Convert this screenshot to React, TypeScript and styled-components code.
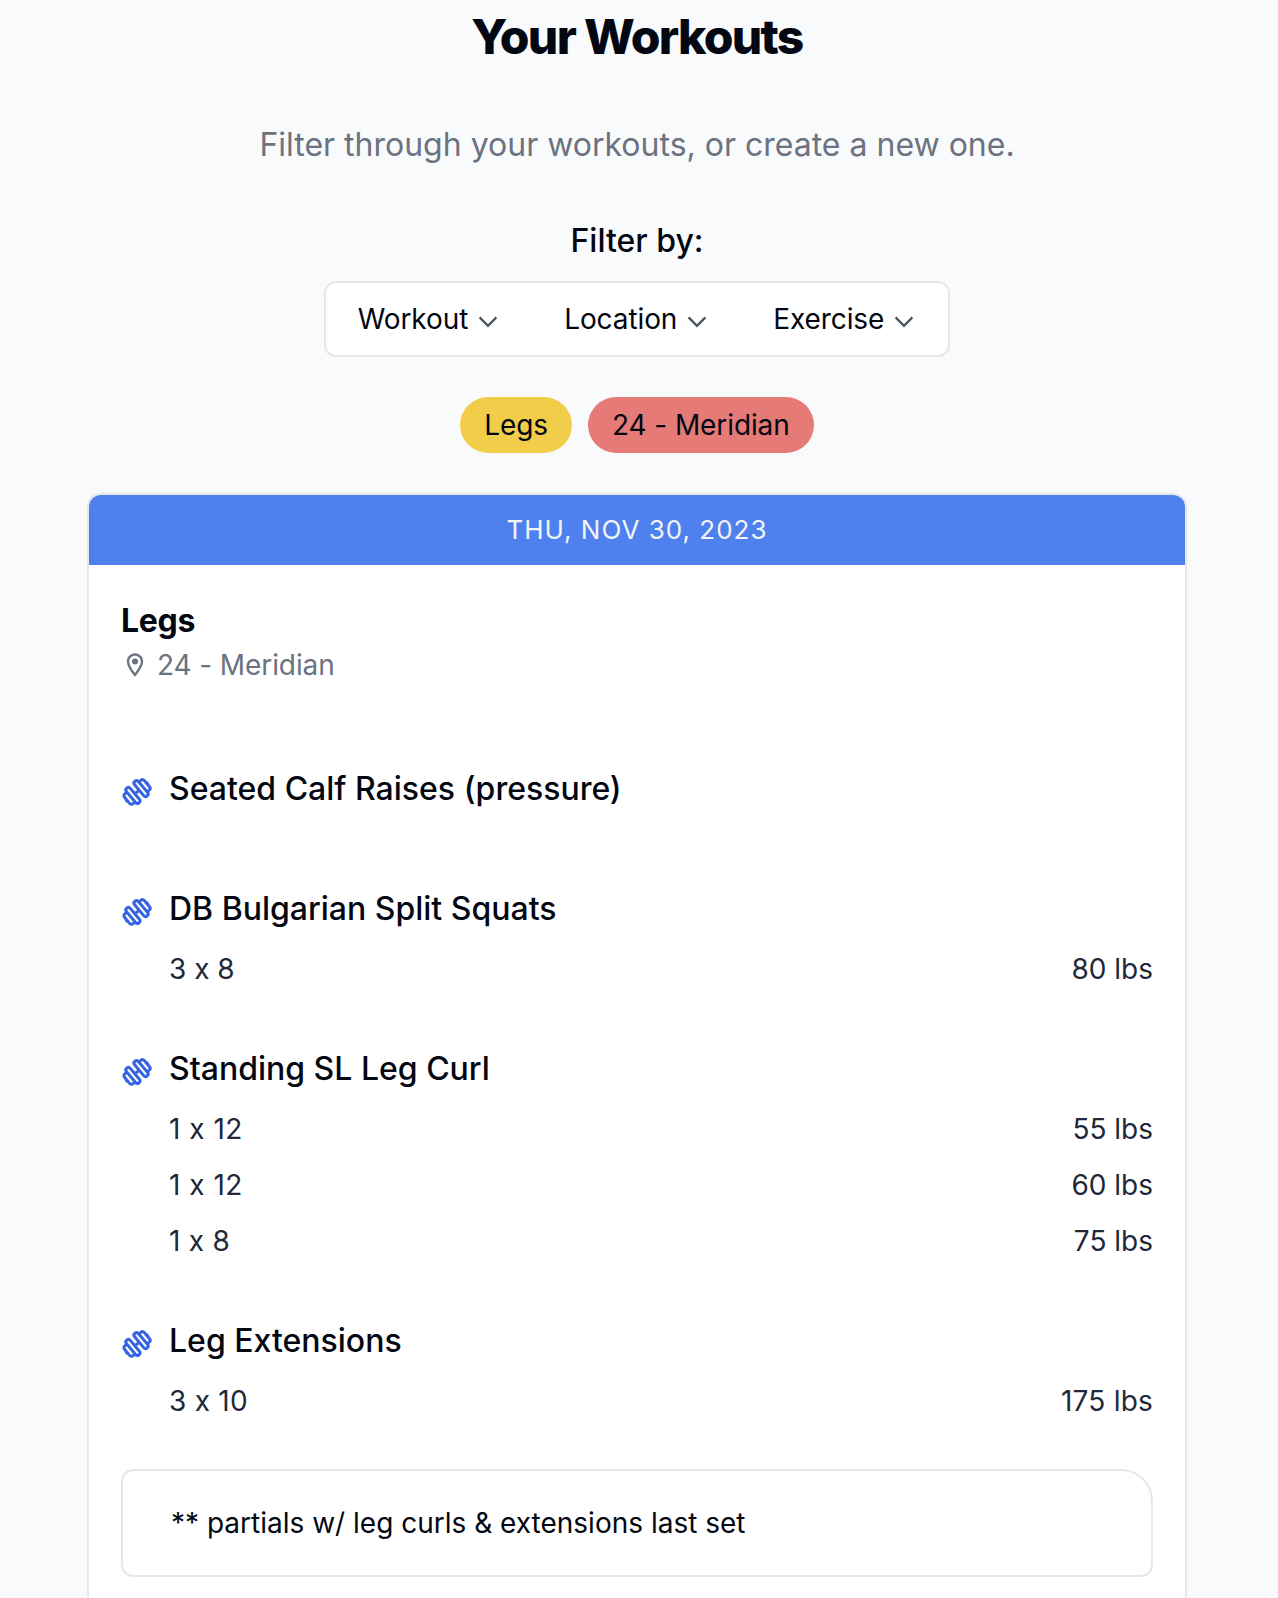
import React from "react";
import styled, { createGlobalStyle } from "styled-components";

const GlobalStyle = createGlobalStyle`
  *, *::before, *::after { box-sizing: border-box; }
  html, body { margin: 0; background: #f9fafc; }
  html { overflow: hidden; }
  body {
    font-family: Inter, "Liberation Sans", sans-serif;
    font-size: 28px;
    line-height: 40px;
    font-feature-settings: "calt" 0;
    color: #030712;
    -webkit-font-smoothing: antialiased;
  }
`;

const Page = styled.main`
  height: 1598px;
  overflow: hidden;
  padding: 13px 4px 0 0;
  display: flex;
  flex-direction: column;
  align-items: center;
`;

const Title = styled.h1`
  margin: 0;
  font-size: 48px;
  line-height: 48px;
  font-weight: 800;
  letter-spacing: -0.035em;
`;

const Subtitle = styled.p`
  margin: 56px 0 0;
  font-size: 32px;
  line-height: 56px;
  color: #6b7280;
`;

const FilterLabel = styled.h2`
  margin: 48px 0 0;
  font-size: 32px;
  line-height: 40px;
  font-weight: 500;
`;

const FilterBar = styled.div`
  margin-top: 20px;
  display: flex;
  gap: 64px;
  padding: 16px 32px;
  border: 2px solid #e5e7eb;
  border-radius: 12px;
  background: #fff;
`;

const FilterButton = styled.button`
  display: flex;
  align-items: center;
  gap: 8px;
  padding: 0;
  border: 0;
  background: none;
  font: inherit;
  letter-spacing: -0.1px;
  color: inherit;
`;

const Chevron = styled.svg`
  width: 24px;
  height: 24px;
  margin-top: 5px;
  fill: none;
  stroke: #4b5563;
  stroke-width: 2.4;
`;

const Pills = styled.div`
  margin-top: 40px;
  display: flex;
  gap: 16px;
`;

const Pill = styled.span<{ $color: string }>`
  padding: 8px 24px;
  border-radius: 28px;
  letter-spacing: -0.1px;
  background: ${(p) => p.$color};
`;

const Card = styled.article`
  width: 1100px;
  flex: 1 0 auto;
  margin-top: 40px;
  border: 2px solid #e5e7eb;
  border-radius: 14px;
  background: #fff;
  overflow: hidden;
`;

const CardHeader = styled.header`
  height: 70px;
  display: flex;
  align-items: center;
  justify-content: center;
  background: #4e80ee;
  color: #f3f4f6;
  font-size: 26px;
  letter-spacing: 1px;
  text-transform: uppercase;
`;

const CardBody = styled.div`
  padding: 36px 32px 64px;
`;

const WorkoutName = styled.h3`
  margin: 0;
  font-size: 32px;
  line-height: 40px;
  font-weight: 700;
  letter-spacing: -0.01em;
`;

const Place = styled.div`
  margin-top: 4px;
  display: flex;
  align-items: center;
  gap: 8px;
  letter-spacing: -0.1px;
  color: #6b7280;
`;

const PinIcon = styled.svg`
  width: 28px;
  height: 28px;
  fill: currentColor;
`;

const Exercises = styled.ul`
  list-style: none;
  margin: 80px 0 0;
  padding: 0;
  display: flex;
  flex-direction: column;
  gap: 56px;
`;

const ExerciseItem = styled.li`
  display: grid;
  grid-template-columns: 32px 1fr;
  column-gap: 16px;
`;

const DumbbellIcon = styled.svg`
  width: 32px;
  height: 32px;
  margin-top: 11px;
  overflow: visible;
  fill: none;
  stroke: #3563e2;
  stroke-width: 2.9;
  stroke-linejoin: round;
`;

const ExerciseName = styled.h4`
  margin: 0;
  font-size: 32px;
  line-height: 48px;
  font-weight: 500;
`;

const Sets = styled.ul`
  grid-column: 2;
  list-style: none;
  margin: 16px 0 0;
  padding: 0;
  display: flex;
  flex-direction: column;
  gap: 16px;
  color: #1f2937;
`;

const SetRow = styled.li`
  display: flex;
  justify-content: space-between;
`;

const SetValue = styled.span<{ $tracking: number }>`
  letter-spacing: ${(p) => p.$tracking}px;
`;

const Note = styled.p`
  margin: 48px 0 0;
  padding: 32px 48px;
  border: 2px solid #e5e7eb;
  border-radius: 12px 32px 12px 12px;
`;

type Exercise = { name: string; sets: [string, string][] };

const exercises: Exercise[] = [
  { name: "Seated Calf Raises (pressure)", sets: [] },
  { name: "DB Bulgarian Split Squats", sets: [["3 x 8", "80 lbs"]] },
  {
    name: "Standing SL Leg Curl",
    sets: [["1 x 12", "55 lbs"], ["1 x 12", "60 lbs"], ["1 x 8", "75 lbs"]],
  },
  { name: "Leg Extensions", sets: [["3 x 10", "175 lbs"]] },
];

const trackingFor = (text: string) =>
  ((text.split("1").length - 1) * 1.5) / text.length;

function Dumbbell() {
  return (
    <DumbbellIcon viewBox="0 0 32 32">
      <g transform="translate(16 16) rotate(-40) scale(1.04)">
        <rect x="2.7" y="-9.2" width="4.8" height="18.4" rx="2.4" />
        <rect x="-7.5" y="-9.2" width="4.8" height="18.4" rx="2.4" />
        <path d="M7.5-6.2h2.6a2.4 2.4 0 0 1 2.4 2.4v7.6a2.4 2.4 0 0 1-2.4 2.4H7.5" />
        <path d="M-7.5-6.2h-2.6a2.4 2.4 0 0 0-2.4 2.4v7.6a2.4 2.4 0 0 0 2.4 2.4h2.6" />
        <path d="M-2.7 0h5.4M12.5 0h1.8M-12.5 0h-1.8" />
      </g>
    </DumbbellIcon>
  );
}

export default function App() {
  return (
    <>
      <GlobalStyle />
      <Page>
        <Title>Your Workouts</Title>
        <Subtitle>Filter through your workouts, or create a new one.</Subtitle>
        <FilterLabel>Filter by:</FilterLabel>
        <FilterBar>
          {["Workout", "Location", "Exercise"].map((label) => (
            <FilterButton key={label}>
              {label}
              <Chevron viewBox="0 0 24 24">
                <path d="M3.6 7.4 12 15.8l8.4-8.4" />
              </Chevron>
            </FilterButton>
          ))}
        </FilterBar>
        <Pills>
          <Pill $color="#f1cd4a">Legs</Pill>
          <Pill $color="#e67a76">24 - Meridian</Pill>
        </Pills>
        <Card>
          <CardHeader>Thu, Nov 30, 2023</CardHeader>
          <CardBody>
            <WorkoutName>Legs</WorkoutName>
            <Place>
              <PinIcon viewBox="0 0 24 24">
                <path d="M12 2C8.13 2 5 5.13 5 9c0 5.25 7 13 7 13s7-7.75 7-13c0-3.87-3.13-7-7-7zM7 9c0-2.76 2.24-5 5-5s5 2.24 5 5c0 2.88-2.88 7.19-5 9.88C9.92 16.21 7 11.85 7 9z" />
                <circle cx="12" cy="9" r="2.6" />
              </PinIcon>
              24 - Meridian
            </Place>
            <Exercises>
              {exercises.map((ex) => (
                <ExerciseItem key={ex.name}>
                  <Dumbbell />
                  <ExerciseName>{ex.name}</ExerciseName>
                  <Sets>
                    {ex.sets.map(([reps, weight], i) => (
                      <SetRow key={i}>
                        <SetValue $tracking={trackingFor(reps)}>{reps}</SetValue>
                        <SetValue $tracking={trackingFor(weight)}>{weight}</SetValue>
                      </SetRow>
                    ))}
                  </Sets>
                </ExerciseItem>
              ))}
            </Exercises>
            <Note>** partials w/ leg curls &amp; extensions last set</Note>
          </CardBody>
        </Card>
      </Page>
    </>
  );
}
